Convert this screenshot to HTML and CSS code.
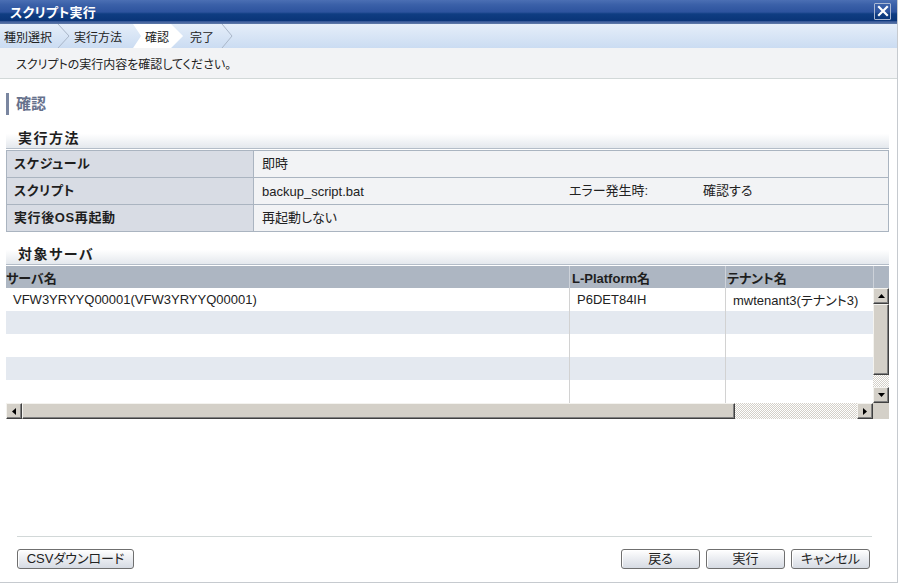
FILE: index.html
```html
<!DOCTYPE html>
<html lang="ja">
<head>
<meta charset="utf-8">
<title>スクリプト実行</title>
<link rel="stylesheet" href="styles.css">
</head>
<body>
<div class="window">
  <div class="titlebar">
    <span class="title">スクリプト実行</span>
    <span class="close"><svg width="14" height="14" viewBox="0 0 14 14"><path d="M3 3 L11 11 M11 3 L3 11" stroke="#fff" stroke-width="2.2" stroke-linecap="square"/></svg></span>
  </div>
  <div class="crumbs">
    <span class="crumb">種別選択</span>
    <svg class="sep" width="22" height="24" viewBox="0 0 22 24"><polyline points="6,0 17,12 6,24" fill="none" stroke="#a9b6c8" stroke-width="1"/></svg>
    <span class="crumb">実行方法</span>
    <span class="crumb active">確認</span>
    <span class="crumb next">完了</span>
    <svg class="sep" width="22" height="24" viewBox="0 0 22 24"><polyline points="8,0 18,12 8,24" fill="none" stroke="#a9b6c8" stroke-width="1"/></svg>
  </div>
  <div class="message">スクリプトの実行内容を確認してください。</div>
  <div class="content">
    <div class="page-head">確認</div>
    <div class="section first">実行方法</div>
    <table class="props">
      <tr><th>スケジュール</th><td>即時</td></tr>
      <tr><th>スクリプト</th><td><div class="script-row"><span class="script-name">backup_script.bat</span><span class="err-label">エラー発生時:</span><span>確認する</span></div></td></tr>
      <tr><th>実行後OS再起動</th><td>再起動しない</td></tr>
    </table>
    <div class="section">対象サーバ</div>
    <div class="grid">
      <div class="grid-head">
        <span class="hc c1">サーバ名</span>
        <span class="hc c2">L-Platform名</span>
        <span class="hc c3">テナント名</span>
        <span class="hc c4"></span>
      </div>
      <div class="grid-mid">
        <div class="rows">
          <div class="row"><span class="c c1">VFW3YRYYQ00001(VFW3YRYYQ00001)</span><span class="c c2">P6DET84IH</span><span class="c c3">mwtenant3(テナント3)</span></div>
          <div class="row alt"><span class="c c1"></span><span class="c c2"></span><span class="c c3"></span></div>
          <div class="row"><span class="c c1"></span><span class="c c2"></span><span class="c c3"></span></div>
          <div class="row alt"><span class="c c1"></span><span class="c c2"></span><span class="c c3"></span></div>
          <div class="row"><span class="c c1"></span><span class="c c2"></span><span class="c c3"></span></div>
        </div>
        <div class="vscroll">
          <span class="sbtn"><svg width="7" height="4" viewBox="0 0 7 4"><polygon points="3.5,0 7,4 0,4" fill="#000"/></svg></span>
          <span class="vthumb"></span>
          <span class="track"></span>
          <span class="sbtn"><svg width="7" height="4" viewBox="0 0 7 4"><polygon points="0,0 7,0 3.5,4" fill="#000"/></svg></span>
        </div>
      </div>
      <div class="hscroll">
        <span class="sbtn"><svg width="4" height="7" viewBox="0 0 4 7"><polygon points="4,0 4,7 0,3.5" fill="#000"/></svg></span>
        <span class="hthumb"></span>
        <span class="track"></span>
        <span class="sbtn"><svg width="4" height="7" viewBox="0 0 4 7"><polygon points="0,0 4,3.5 0,7" fill="#000"/></svg></span>
        <span class="corner"></span>
      </div>
    </div>
  </div>
  <div class="footer">
    <button class="btn csv">CSVダウンロード</button>
    <div class="right">
      <button class="btn">戻る</button>
      <button class="btn">実行</button>
      <button class="btn">キャンセル</button>
    </div>
  </div>
</div>
</body>
</html>
```
FILE: styles.css
```css
* { box-sizing: border-box; }
html, body { margin: 0; padding: 0; background: #fff; }
body {
  font-family: "Liberation Sans", "Noto Sans CJK JP", sans-serif;
  font-size: 12px;
  color: #222;
  font-feature-settings: "palt";
}
.window {
  width: 898px;
  height: 583px;
  border-right: 1px solid #c6cacf;
  border-bottom: 1px solid #c6cacf;
  display: flex;
  flex-direction: column;
  overflow: hidden;
}
.titlebar {
  height: 24px;
  flex: none;
  display: flex;
  align-items: center;
  justify-content: space-between;
  padding: 0 6px 0 10px;
  background: linear-gradient(to bottom, #4b6fb4 0%, #3a60a8 20%, #2d539e 50%, #0f3d82 58%, #0a3579 86%, #3c5d9c 90%, #5f7aa8 100%);
}
.title {
  color: #fff;
  font-weight: bold;
  font-size: 13px;
  letter-spacing: 0.3px;
  margin-top: -1px;
}
.close {
  width: 17px;
  height: 17px;
  border: 1px solid #a9b7d2;
  border-radius: 1px;
  display: flex;
  align-items: center;
  justify-content: center;
  margin-top: -2px;
}
.crumbs {
  height: 24px;
  flex: none;
  display: flex;
  align-items: stretch;
  padding-left: 4px;
  background: linear-gradient(to bottom, #e5eef9, #cbdcf2);
}
.crumb {
  display: flex;
  align-items: center;
  font-size: 12px;
  color: #222;
  font-feature-settings: normal;
}
.sep { flex: none; display: block; }
.crumb.active {
  margin-left: 11px;
  padding: 0 14px 0 12px;
  background: #fff;
  clip-path: polygon(0 0, 38px 0, 50px 50%, 38px 100%, 0 100%, 8px 50%);
}
.crumb.next { margin-left: 7px; }
.message {
  height: 31px;
  flex: none;
  background: #f2f3f5;
  border-bottom: 1px solid #d2d8d8;
  padding-left: 16px;
  display: flex;
  align-items: center;
  font-size: 12px;
  color: #222;
}
.content {
  padding: 0 8px 0 6px;
}
.page-head {
  margin-top: 14px;
  height: 22px;
  line-height: 22px;
  border-left: 3px solid #7a86a0;
  padding-left: 7px;
  font-size: 15px;
  font-weight: bold;
  color: #66718c;
}
.section {
  margin-top: 10px;
  height: 23px;
  padding-left: 12px;
  line-height: 24px;
  font-size: 14px;
  font-weight: bold;
  letter-spacing: 1.5px;
  color: #1e1e1e;
  background: linear-gradient(to bottom, #ffffff 0%, #ffffff 35%, #e4e8ed 100%);
  border-bottom: 1px solid #b4bdc8;
}
.section.first { margin-top: 11px; }
.props {
  margin-top: 1px;
  width: 100%;
  border-collapse: collapse;
  border: 1px solid #aab4c0;
}
.props th, .props td {
  height: 27px;
  border: 1px solid #aab4c0;
  padding: 0;
  font-size: 13px;
  line-height: 16px;
  text-align: left;
  vertical-align: middle;
}
.props th {
  width: 247px;
  background: #d8dce4;
  font-weight: bold;
  padding-left: 7px;
  letter-spacing: 0.6px;
  color: #1e1e1e;
}
.props td {
  background: #f2f3f5;
  padding-left: 8px;
  color: #222;
}
.script-row { display: flex; align-items: center; line-height: 16px; }
.script-row span { display: block; line-height: 16px; }
.script-name { width: 307px; padding-top: 1px; }
.err-label { width: 134px; }
.grid {
  margin-top: 1px;
  width: 883px;
}
.grid-head {
  display: flex;
  height: 22px;
  background: #adb6c2;
}
.hc {
  display: flex;
  align-items: center;
  font-size: 13px;
  font-weight: bold;
  color: #1e1e1e;
}
.grid-head .c2, .grid-head .c3, .grid-head .c4 { border-left: 1px solid #cdd2d9; }
.c1 { width: 563px; flex: none; }
.c2 { width: 156px; flex: none; }
.c3 { width: 148px; flex: none; }
.c4 { width: 16px; flex: none; }
.grid-head .c1 { padding-left: 0; }
.grid-head .c2 { padding-left: 2px; }
.grid-head .c3 { padding-left: 1px; }
.grid-mid { display: flex; }
.rows { width: 867px; flex: none; }
.row {
  display: flex;
  height: 23px;
  background: #fff;
}
.row.alt { background: #e4e9f0; }
.c {
  display: flex;
  align-items: center;
  font-size: 13px;
  color: #222;
  white-space: nowrap;
}
.row .c1 { padding-left: 7px; }
.row .c2 { border-left: 1px solid #d2d2d2; padding-left: 7px; }
.row .c3 { border-left: 1px solid #d2d2d2; padding-left: 7px; }
.sbtn {
  width: 16px;
  height: 16px;
  flex: none;
  display: flex;
  align-items: center;
  justify-content: center;
  background: #d4d0c8;
  border: 1px solid;
  border-color: #f4f3ef #404040 #404040 #f4f3ef;
  box-shadow: inset -1px -1px #808080;
}
.vscroll {
  width: 16px;
  flex: none;
  display: flex;
  flex-direction: column;
}
.vthumb {
  height: 71px;
  flex: none;
  background: #d4d0c8;
  border: 1px solid;
  border-color: #f4f3ef #404040 #404040 #f4f3ef;
  box-shadow: inset -1px -1px #808080;
}
.track {
  flex: 1;
  background: repeating-conic-gradient(#d4d0c8 0 25%, #ffffff 0 50%) 0 0 / 2px 2px;
}
.hscroll {
  display: flex;
  height: 16px;
}
.hthumb {
  width: 713px;
  flex: none;
  background: #d4d0c8;
  border: 1px solid;
  border-color: #f4f3ef #404040 #404040 #f4f3ef;
  box-shadow: inset -1px -1px #808080;
}
.corner {
  width: 16px;
  flex: none;
  background: #d4d0c8;
}
.footer {
  margin: auto 25px 0 17px;
  border-top: 1px solid #d2d8d8;
  padding: 12px 2px 13px 0;
  display: flex;
  justify-content: space-between;
}
.right { display: flex; gap: 6px; }
.btn {
  height: 20px;
  width: 79px;
  padding: 0;
  border: 1px solid #6f6f6f;
  border-radius: 3px;
  background: linear-gradient(to bottom, #ffffff 0%, #eceef2 45%, #d6dbe3 100%);
  box-shadow: inset 1px 1px #ffffff;
  font-family: "Liberation Sans", "Noto Sans CJK JP", sans-serif;
  font-size: 13px;
  color: #222;
  font-feature-settings: "palt";
  line-height: 18px;
}
.btn.csv { width: 117px; }
```
